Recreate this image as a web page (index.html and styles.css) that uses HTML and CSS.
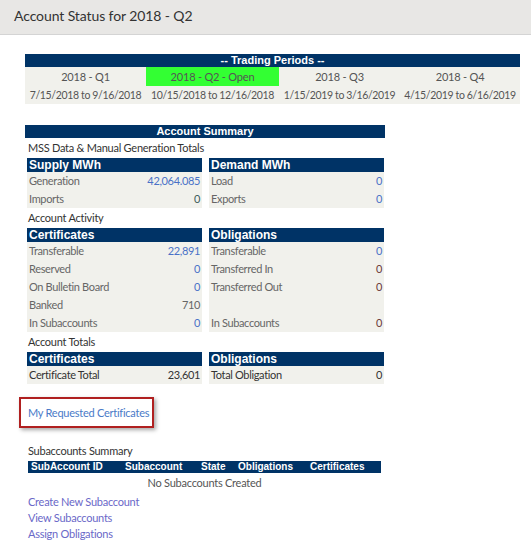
FILE: index.html
```html
<!DOCTYPE html>
<html>
<head>
<meta charset="utf-8">
<link rel="stylesheet" href="styles.css">
</head>
<body>
<div class="topbar"><h1 class="title">Account Status for 2018 - Q2</h1></div>

<table class="periods">
  <colgroup>
    <col class="p1"><col class="p2"><col class="p3"><col class="p4">
  </colgroup>
  <tr><th colspan="4" class="navy">-- Trading Periods --</th></tr>
  <tr class="qrow">
    <td>2018 - Q1</td>
    <td class="open">2018 - Q2 - Open</td>
    <td>2018 - Q3</td>
    <td>2018 - Q4</td>
  </tr>
  <tr class="drow">
    <td>7/15/2018 to 9/16/2018</td>
    <td>10/15/2018 to 12/16/2018</td>
    <td>1/15/2019 to 3/16/2019</td>
    <td>4/15/2019 to 6/16/2019</td>
  </tr>
</table>

<div class="summary">
  <div class="navy sumhead">Account Summary</div>
  <div class="section">MSS Data &amp; Manual Generation Totals</div>
  <div class="pair">
    <div class="box">
      <div class="navy bh">Supply MWh</div>
      <div class="row"><span>Generation</span><span class="v blue">42,064.085</span></div>
      <div class="row"><span>Imports</span><span class="v teal">0</span></div>
    </div>
    <div class="box">
      <div class="navy bh">Demand MWh</div>
      <div class="row"><span>Load</span><span class="v blue">0</span></div>
      <div class="row"><span>Exports</span><span class="v blue">0</span></div>
    </div>
  </div>
  <div class="section">Account Activity</div>
  <div class="pair">
    <div class="box">
      <div class="navy bh">Certificates</div>
      <div class="row"><span>Transferable</span><span class="v blue">22,891</span></div>
      <div class="row"><span>Reserved</span><span class="v blue">0</span></div>
      <div class="row"><span>On Bulletin Board</span><span class="v blue">0</span></div>
      <div class="row"><span>Banked</span><span class="v gray">710</span></div>
      <div class="row"><span>In Subaccounts</span><span class="v blue">0</span></div>
    </div>
    <div class="box">
      <div class="navy bh">Obligations</div>
      <div class="row"><span>Transferable</span><span class="v blue">0</span></div>
      <div class="row"><span>Transferred In</span><span class="v brown">0</span></div>
      <div class="row"><span>Transferred Out</span><span class="v brown">0</span></div>
      <div class="row"><span></span><span></span></div>
      <div class="row"><span>In Subaccounts</span><span class="v brown">0</span></div>
    </div>
  </div>
  <div class="section">Account Totals</div>
  <div class="pair">
    <div class="box">
      <div class="navy bh">Certificates</div>
      <div class="row dark"><span>Certificate Total</span><span class="v">23,601</span></div>
    </div>
    <div class="box">
      <div class="navy bh">Obligations</div>
      <div class="row dark"><span>Total Obligation</span><span class="v">0</span></div>
    </div>
  </div>
</div>

<div class="reqbox"><a class="reqlink" href="#">My Requested Certificates</a></div>

<div class="subs">
  <div class="section">Subaccounts Summary</div>
  <table class="subtable">
    <tr class="navy">
      <th class="c1">SubAccount ID</th>
      <th class="c2">Subaccount</th>
      <th class="c3">State</th>
      <th class="c4">Obligations</th>
      <th class="c5">Certificates</th>
    </tr>
    <tr><td colspan="5" class="empty">No Subaccounts Created</td></tr>
  </table>
  <div class="links">
    <a href="#">Create New Subaccount</a>
    <a href="#">View Subaccounts</a>
    <a href="#">Assign Obligations</a>
  </div>
</div>
</body>
</html>
```

FILE: styles.css
```css
body {
  margin: 0;
  font-family: Lato, "Open Sans", sans-serif;
  font-size: 11px;
  letter-spacing: -0.25px;
  color: #555;
  background: #fff;
}
.topbar {
  height: 34px;
  background: #e8e7e5;
  border-bottom: 1px solid #d4d4d4;
  padding-left: 14px;
}
.title {
  margin: 0;
  font-size: 14px;
  letter-spacing: -0.1px;
  font-weight: normal;
  color: #333;
  line-height: 32px;
}
.navy {
  background: #003366;
  color: #fff;
  font-family: "Liberation Sans", Arial, sans-serif;
  font-weight: bold;
  font-size: 11px;
  letter-spacing: 0;
}
.periods {
  margin: 19px 0 0 25px;
  width: 495px;
  table-layout: fixed;
  border-collapse: collapse;
  background: #f1f1ec;
}
.p1 { width: 121px; }
.p2 { width: 133px; }
.p3 { width: 121px; }
.p4 { width: 120px; }
.periods th {
  height: 13px;
  padding: 0;
  line-height: 13px;
}
.periods td {
  padding: 0;
  text-align: center;
  color: #555;
  white-space: nowrap;
  font-size: 11px;
  letter-spacing: -0.2px;
}
.qrow td { height: 19px; }
.drow td {
  height: 18px;
  font-size: 10.5px;
  letter-spacing: -0.35px;
}
.periods td.open { background: #33ff33; }

.summary {
  margin: 21px 0 0 25px;
  width: 360px;
}
.sumhead {
  height: 13px;
  line-height: 13px;
  text-align: center;
}
.section {
  height: 20px;
  line-height: 20px;
  padding-left: 3px;
  color: #333;
}
.pair {
  display: flex;
  gap: 7px;
  padding-left: 2px;
}
.box {
  width: 175px;
  background: #f1f1ec;
}
.bh {
  height: 14px;
  line-height: 14px;
  padding-left: 2px;
  font-size: 12px;
}
.row {
  display: flex;
  justify-content: space-between;
  height: 18px;
  line-height: 18px;
  padding: 0 2px;
  color: #666;
  letter-spacing: -0.35px;
}
.row.dark { color: #333; }
.v.blue { color: #4a71c7; }
.v.teal { color: #3b5d5b; }
.v.gray { color: #666; }
.v.brown { color: #6b3a3a; }

.reqbox {
  margin: 13px 0 0 19px;
  width: 124px;
  height: 27px;
  border: 2px solid #b02020;
  box-shadow: 2px 2px 4px rgba(0,0,0,0.35);
  padding-left: 7px;
  line-height: 27px;
  white-space: nowrap;
}
.reqlink {
  color: #4a7ac8;
  text-decoration: none;
}
.subs {
  margin: 13px 0 0 25px;
}
.subtable {
  margin-left: 3px;
  width: 353px;
  border-collapse: collapse;
}
.subtable th {
  height: 12px;
  line-height: 12px;
  padding: 0;
  text-align: left;
  font-size: 10px;
}
.c1 { width: 94px; padding-left: 3px !important; }
.c2 { width: 76px; }
.c3 { width: 37px; }
.c4 { width: 72px; }
.empty {
  text-align: center;
  height: 19px;
  padding: 0;
  color: #555;
}
.links {
  margin-top: 2px;
  display: flex;
  flex-direction: column;
}
.links a {
  color: #6a68c8;
  text-decoration: none;
  height: 16px;
  line-height: 16px;
  padding-left: 3px;
}
```
